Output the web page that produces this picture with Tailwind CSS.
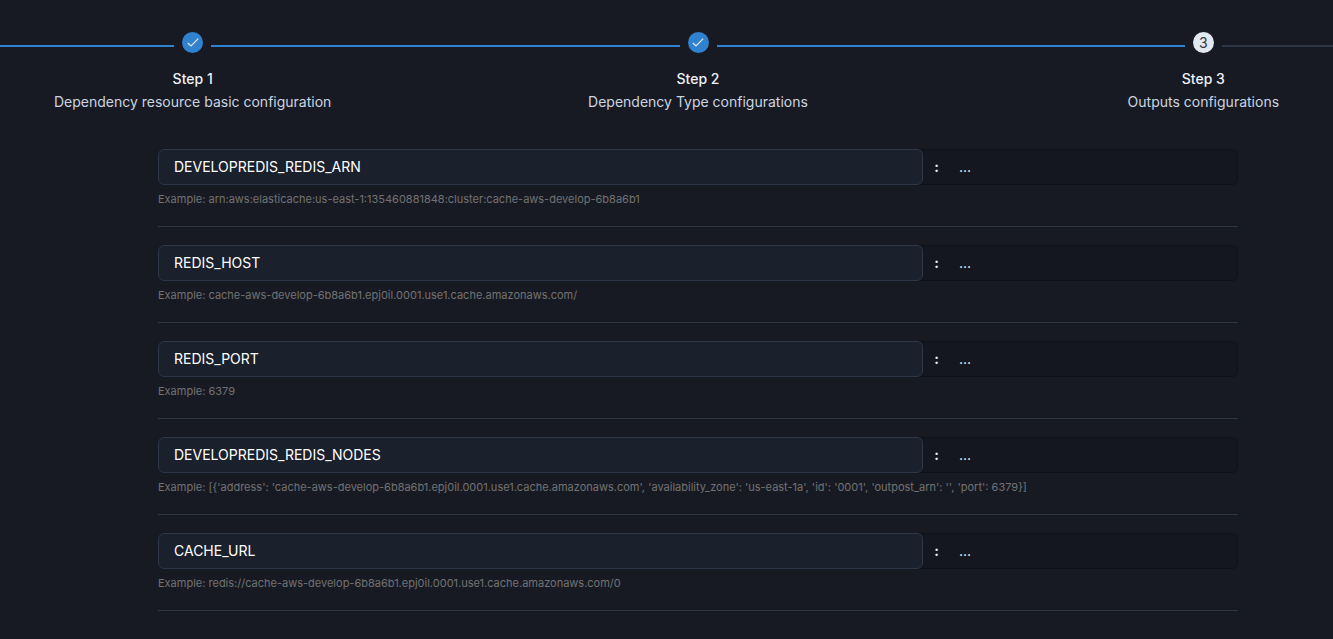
<!DOCTYPE html>
<html lang="en">
<head>
<meta charset="utf-8">
<meta name="viewport" content="width=device-width, initial-scale=1">
<title>Outputs configurations</title>
<script src="https://cdn.jsdelivr.net/npm/@tailwindcss/browser@4"></script>
</head>
<body class="min-h-screen overflow-x-hidden bg-[#181a23] font-['Inter',sans-serif] text-white">
<nav aria-label="Progress" class="overflow-hidden pt-8">
  <ol class="-mr-[123px] -ml-[60px] grid grid-cols-3 text-center text-sm">
    <li>
      <div class="flex h-[21px] items-center">
        <span class="mt-[6px] mr-2 h-[2px] flex-1 bg-[#3182ce]"></span>
        <span class="flex size-[21px] items-center justify-center rounded-full bg-[#3182ce]">
          <svg class="size-3" viewBox="0 0 12 12" fill="none" stroke="#e2e8f0" stroke-width="1.2" aria-hidden="true"><path d="M.8 6 4 9 11.2 1.7"/></svg>
        </span>
        <span class="mt-[6px] ml-2 h-[2px] flex-1 bg-[#3182ce]"></span>
      </div>
      <p class="mt-[14px] leading-[23px] font-medium text-[#edf2f7]">Step 1</p>
      <p class="leading-[23px] text-[#cbd5e0]">Dependency resource basic configuration</p>
    </li>
    <li>
      <div class="flex h-[21px] items-center">
        <span class="mt-[6px] mr-2 h-[2px] flex-1 bg-[#3182ce]"></span>
        <span class="flex size-[21px] items-center justify-center rounded-full bg-[#3182ce]">
          <svg class="size-3" viewBox="0 0 12 12" fill="none" stroke="#e2e8f0" stroke-width="1.2" aria-hidden="true"><path d="M.8 6 4 9 11.2 1.7"/></svg>
        </span>
        <span class="mt-[6px] ml-2 h-[2px] flex-1 bg-[#3182ce]"></span>
      </div>
      <p class="mt-[14px] leading-[23px] font-medium text-[#edf2f7]">Step 2</p>
      <p class="leading-[23px] text-[#cbd5e0]">Dependency Type configurations</p>
    </li>
    <li aria-current="step">
      <div class="flex h-[21px] items-center">
        <span class="mt-[6px] mr-2 h-[2px] flex-1 bg-[#3182ce]"></span>
        <span class="flex size-[21px] items-center justify-center rounded-full bg-[#e2e8f0] text-[#2d3748]">3</span>
        <span class="mt-[6px] ml-2 h-[2px] flex-1 bg-[#2d3748]"></span>
      </div>
      <p class="mt-[14px] leading-[23px] font-medium text-[#edf2f7]">Step 3</p>
      <p class="leading-[23px] text-[#cbd5e0]">Outputs configurations</p>
    </li>
  </ol>
</nav>
<form class="mt-9 mr-[95px] ml-[158px] flex flex-col gap-[18px]">
  <div class="border-b border-[#2d3748] pb-[18px]">
    <div class="flex h-9 rounded-md border border-[#10121a] bg-[#14171f] text-sm">
      <input id="k1" aria-label="Output name" aria-describedby="e1" value="DEVELOPREDIS_REDIS_ARN" class="-my-px -ml-px min-w-0 flex-1 rounded-md border border-[#2d3748] bg-[#1a202c] px-[15px] text-white outline-none">
      <span class="w-[27px] text-center leading-[34px] font-bold">:</span>
      <input aria-label="Output value" value="..." class="w-[287px] bg-transparent px-[9px] text-white outline-none">
    </div>
    <label id="e1" for="k1" class="mt-[6px] block text-[11px] leading-[17px] text-[#727272]">Example: arn:aws:elasticache:us-east-1:135460881848:cluster:cache-aws-develop-6b8a6b1</label>
  </div>
  <div class="border-b border-[#2d3748] pb-[18px]">
    <div class="flex h-9 rounded-md border border-[#10121a] bg-[#14171f] text-sm">
      <input id="k2" aria-label="Output name" aria-describedby="e2" value="REDIS_HOST" class="-my-px -ml-px min-w-0 flex-1 rounded-md border border-[#2d3748] bg-[#1a202c] px-[15px] text-white outline-none">
      <span class="w-[27px] text-center leading-[34px] font-bold">:</span>
      <input aria-label="Output value" value="..." class="w-[287px] bg-transparent px-[9px] text-white outline-none">
    </div>
    <label id="e2" for="k2" class="mt-[6px] block text-[11px] leading-[17px] text-[#727272]">Example: cache-aws-develop-6b8a6b1.epj0il.0001.use1.cache.amazonaws.com/</label>
  </div>
  <div class="border-b border-[#2d3748] pb-[18px]">
    <div class="flex h-9 rounded-md border border-[#10121a] bg-[#14171f] text-sm">
      <input id="k3" aria-label="Output name" aria-describedby="e3" value="REDIS_PORT" class="-my-px -ml-px min-w-0 flex-1 rounded-md border border-[#2d3748] bg-[#1a202c] px-[15px] text-white outline-none">
      <span class="w-[27px] text-center leading-[34px] font-bold">:</span>
      <input aria-label="Output value" value="..." class="w-[287px] bg-transparent px-[9px] text-white outline-none">
    </div>
    <label id="e3" for="k3" class="mt-[6px] block text-[11px] leading-[17px] text-[#727272]">Example: 6379</label>
  </div>
  <div class="border-b border-[#2d3748] pb-[18px]">
    <div class="flex h-9 rounded-md border border-[#10121a] bg-[#14171f] text-sm">
      <input id="k4" aria-label="Output name" aria-describedby="e4" value="DEVELOPREDIS_REDIS_NODES" class="-my-px -ml-px min-w-0 flex-1 rounded-md border border-[#2d3748] bg-[#1a202c] px-[15px] text-white outline-none">
      <span class="w-[27px] text-center leading-[34px] font-bold">:</span>
      <input aria-label="Output value" value="..." class="w-[287px] bg-transparent px-[9px] text-white outline-none">
    </div>
    <label id="e4" for="k4" class="mt-[6px] block text-[11px] leading-[17px] text-[#727272]">Example: [{'address': 'cache-aws-develop-6b8a6b1.epj0il.0001.use1.cache.amazonaws.com', 'availability_zone': 'us-east-1a', 'id': '0001', 'outpost_arn': '', 'port': 6379}]</label>
  </div>
  <div class="border-b border-[#2d3748] pb-[18px]">
    <div class="flex h-9 rounded-md border border-[#10121a] bg-[#14171f] text-sm">
      <input id="k5" aria-label="Output name" aria-describedby="e5" value="CACHE_URL" class="-my-px -ml-px min-w-0 flex-1 rounded-md border border-[#2d3748] bg-[#1a202c] px-[15px] text-white outline-none">
      <span class="w-[27px] text-center leading-[34px] font-bold">:</span>
      <input aria-label="Output value" value="..." class="w-[287px] bg-transparent px-[9px] text-white outline-none">
    </div>
    <label id="e5" for="k5" class="mt-[6px] block text-[11px] leading-[17px] text-[#727272]">Example: redis://cache-aws-develop-6b8a6b1.epj0il.0001.use1.cache.amazonaws.com/0</label>
  </div>
</form>
</body>
</html>
